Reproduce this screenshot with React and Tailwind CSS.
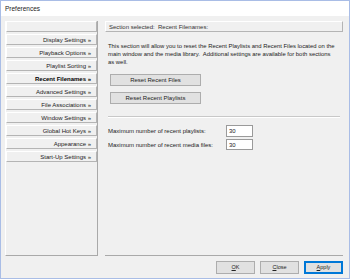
import React from 'react';

const navItems = [
  '',
  'Display Settings »',
  'Playback Options »',
  'Playlist Sorting »',
  'Recent Filenames »',
  'Advanced Settings »',
  'File Associations »',
  'Window Settings »',
  'Global Hot Keys »',
  'Appearance »',
  'Start-Up Settings »',
];

function NavButton({ label }) {
  const active = label === 'Recent Filenames »';
  return (
    <div
      className={`h-[11px] flex items-center justify-end pr-[5px] border border-t-white border-l-white border-r-[#b4b4b4] border-b-[#b4b4b4] bg-[#f0f0f0] text-[6px] leading-none text-[#222] ${active ? 'font-bold text-black' : ''}`}
    >
      {label}
    </div>
  );
}

function GrayButton({ children }) {
  return (
    <div className="w-[91px] h-[12px] flex items-center justify-center border border-[#adadad] bg-[#e1e1e1] text-[6px] leading-none text-[#222]">
      {children}
    </div>
  );
}

function FooterButton({ children, primary }) {
  return (
    <div
      className={`w-[39px] h-[13px] flex items-center justify-center bg-[#e1e1e1] text-[5.5px] leading-none text-[#222] ${primary ? 'border-2 border-[#0078d7]' : 'border border-[#adadad]'}`}
    >
      {children}
    </div>
  );
}

export default function App() {
  return (
    <div
      className="w-[350px] h-[279px] flex flex-col border border-[#a9bde6] bg-[#f0f0f0] overflow-hidden"
      style={{ fontFamily: '"Liberation Sans", Arial, sans-serif' }}
    >
      {/* Title bar */}
      <div className="h-[15px] bg-white flex items-center pl-[4px] text-[6.5px] text-[#222]">
        Preferences
      </div>

      <div className="flex pl-[4px] pt-[5px]">
        {/* Nav list */}
        <div className="w-[93px] h-[235px] flex flex-col gap-[2px] border-l border-l-white border-r border-r-[#a9a9a9] border-b border-b-[#a9a9a9]">
          {navItems.map((item, i) => (
            <NavButton key={i} label={item} />
          ))}
        </div>

        {/* Section panel */}
        <div className="ml-[7px] w-[238px] h-[235px] flex flex-col border-b border-b-[#a9a9a9]">
          <div className="h-[11px] flex items-center pl-[3px] border border-t-white border-l-white border-r-[#b4b4b4] border-b-[#b4b4b4] text-[6px] leading-none text-[#333] whitespace-pre">
            Section selected:  Recent Filenames:
          </div>

          <p className="mt-[10px] pl-[3px] pr-[6px] text-[5.9px] leading-[8px] text-[#222]">
            This section will allow you to reset the Recent Playlists and Recent Files located on the main window and the media library.&nbsp; Additional settings are available for both sections as well.
          </p>

          <div className="mt-[8px] pl-[5px] flex flex-col gap-[6px]">
            <GrayButton>Reset Recent Files</GrayButton>
            <GrayButton>Reset Recent Playlists</GrayButton>
          </div>

          <div className="mt-[12px] mx-[3px] h-0 border-t border-t-[#c8c8c8] border-b border-b-white" />

          <div className="mt-[7px] pl-[3px] flex flex-col gap-[2px] text-[6px] leading-none text-[#222]">
            <div className="flex items-center">
              <span className="w-[118px]">Maximum number of recent playlists:</span>
              <div className="w-[27px] h-[12px] flex items-center pl-[2px] bg-white border border-[#9a9a9a]">30</div>
            </div>
            <div className="flex items-center">
              <span className="w-[118px]">Maximum number of recent media files:</span>
              <div className="w-[27px] h-[11px] flex items-center pl-[2px] bg-white border border-[#9a9a9a]">30</div>
            </div>
          </div>
        </div>
      </div>

      {/* Footer */}
      <div className="mt-[5px] flex justify-end gap-[5px] pr-[6px]">
        <FooterButton><span className="underline">O</span>K</FooterButton>
        <FooterButton><span className="underline">C</span>lose</FooterButton>
        <FooterButton primary><span className="underline">A</span>pply</FooterButton>
      </div>
    </div>
  );
}
